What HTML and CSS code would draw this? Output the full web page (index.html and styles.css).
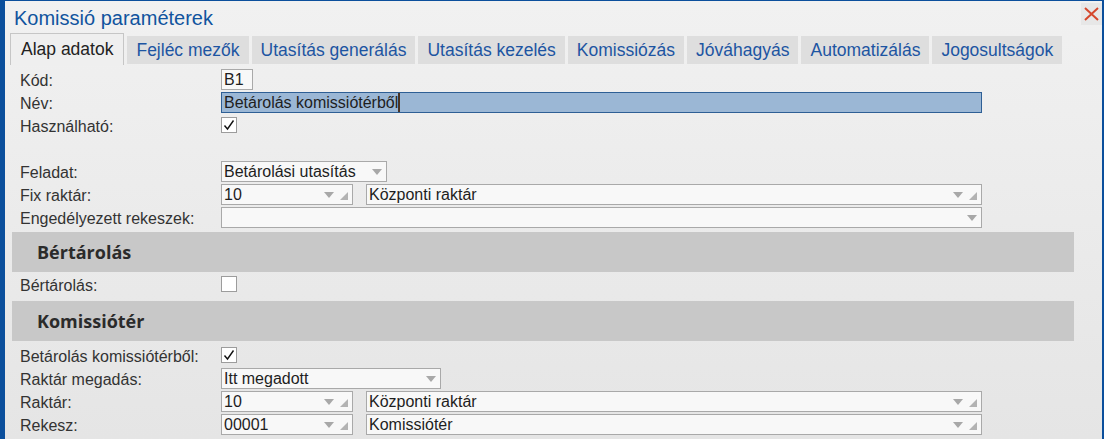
FILE: index.html
```html
<!DOCTYPE html>
<html lang="hu">
<head>
<meta charset="utf-8">
<title>Komissió paraméterek</title>
<link rel="stylesheet" href="styles.css">
</head>
<body>
<div class="window">
  <div class="titlebar">
    <span class="title">Komissió paraméterek</span>
    <button class="close" aria-label="Bezárás">
      <svg width="15" height="14" viewBox="0 0 15 14"><path d="M1 1 L14 13 M14 1 L1 13" stroke="#d5472c" stroke-width="2" fill="none"/></svg>
    </button>
  </div>
  <div class="tabs">
    <div class="tab tab--active">Alap adatok</div>
    <div class="tab">Fejléc mezők</div>
    <div class="tab">Utasítás generálás</div>
    <div class="tab">Utasítás kezelés</div>
    <div class="tab">Komissiózás</div>
    <div class="tab">Jóváhagyás</div>
    <div class="tab">Automatizálás</div>
    <div class="tab">Jogosultságok</div>
  </div>
  <div class="panel">
    <div class="row"><span class="lbl">Kód:</span><div class="field w-kod">B1</div></div>
    <div class="row"><span class="lbl">Név:</span><div class="field field--selected w-full"><span class="sel">Betárolás komissiótérből</span><span class="caret"></span></div></div>
    <div class="row"><span class="lbl">Használható:</span><span class="check"><svg width="14" height="14" viewBox="0 0 14 14"><path d="M2.5 7.5 L5.5 11 L11.5 2.5" stroke="#111" stroke-width="1.4" fill="none"/></svg></span></div>
    <div class="row"></div>
    <div class="row"><span class="lbl">Feladat:</span><div class="field w-feladat"><span class="val">Betárolási utasítás</span><span class="arrow"></span></div></div>
    <div class="row"><span class="lbl">Fix raktár:</span><div class="field w-code"><span class="val">10</span><span class="arrow"></span><span class="corner"></span></div><div class="field w-desc"><span class="val">Központi raktár</span><span class="arrow"></span><span class="corner"></span></div></div>
    <div class="row"><span class="lbl">Engedélyezett rekeszek:</span><div class="field w-full"><span class="val"></span><span class="arrow"></span></div></div>

    <div class="section-head section-head--first">Bértárolás</div>
    <div class="row row--after-first"><span class="lbl">Bértárolás:</span><span class="check"></span></div>

    <div class="section-head section-head--second">Komissiótér</div>
    <div class="row row--after-second"><span class="lbl">Betárolás komissiótérből:</span><span class="check"><svg width="14" height="14" viewBox="0 0 14 14"><path d="M2.5 7.5 L5.5 11 L11.5 2.5" stroke="#111" stroke-width="1.4" fill="none"/></svg></span></div>
    <div class="row"><span class="lbl">Raktár megadás:</span><div class="field w-mode"><span class="val">Itt megadott</span><span class="arrow"></span></div></div>
    <div class="row"><span class="lbl">Raktár:</span><div class="field w-code"><span class="val">10</span><span class="arrow"></span><span class="corner"></span></div><div class="field w-desc"><span class="val">Központi raktár</span><span class="arrow"></span><span class="corner"></span></div></div>
    <div class="row"><span class="lbl">Rekesz:</span><div class="field w-code"><span class="val">00001</span><span class="arrow"></span><span class="corner"></span></div><div class="field w-desc"><span class="val">Komissiótér</span><span class="arrow"></span><span class="corner"></span></div></div>
  </div>
</div>
</body>
</html>
```

FILE: styles.css
```css
* { box-sizing: border-box; }
html, body { margin: 0; padding: 0; }
body {
  width: 1104px;
  height: 439px;
  overflow: hidden;
  font-family: "Liberation Sans", Arial, sans-serif;
  background: #e8e8e8;
}
.window {
  width: 1104px;
  height: 439px;
  border-left: 5px solid #0b4f9c;
  border-top: 1px solid #0b4f9c;
  border-right: 2px solid #0b4f9c;
  background: linear-gradient(#f1f1f1, #e5e5e5);
  overflow: hidden;
}
.titlebar {
  height: 32px;
  display: flex;
  align-items: flex-start;
}
.title {
  margin: 5px 0 0 9px;
  font-size: 20px;
  line-height: 24px;
  color: #10549e;
}
.close {
  margin: 2px 0 0 auto;
  width: 21px;
  height: 22px;
  padding: 0;
  border: none;
  background: #e7e7e7;
  display: flex;
  align-items: center;
  justify-content: center;
}
.tabs {
  display: flex;
  align-items: flex-end;
  gap: 3px;
  height: 32px;
  padding-left: 5px;
}
.tab {
  height: 28px;
  margin-bottom: 1px;
  padding: 0 9px;
  display: flex;
  align-items: center;
  background: #dedede;
  color: #1d55a2;
  font-size: 17.5px;
  white-space: nowrap;
}
.tab--active {
  height: 32px;
  margin-bottom: 0;
  padding: 0 10px;
  background: #efefef;
  border: 1px solid #c6c6c6;
  border-bottom: none;
  color: #222;
}
.panel {
  padding: 4px 28px 0 7px;
}
.row {
  height: 23px;
  display: flex;
  align-items: flex-start;
  padding-left: 8px;
  font-size: 16px;
  line-height: 23px;
  color: #333;
}
.lbl {
  width: 201px;
  flex: none;
  white-space: nowrap;
}
.field {
  height: 21px;
  border: 1px solid #a9a9a9;
  background: #f8f8f8;
  padding: 0 0 0 2px;
  display: flex;
  align-items: center;
  line-height: 19px;
  color: #1e1e1e;
  white-space: nowrap;
  flex: none;
}
.val { flex: 1; overflow: hidden; }
.field--selected {
  background: #9bb7d5;
  border-color: #2e5f95;
}
.caret {
  width: 2px;
  height: 19px;
  background: #4a3424;
}
.arrow {
  width: 0;
  height: 0;
  border-left: 5.5px solid transparent;
  border-right: 5.5px solid transparent;
  border-top: 6px solid #a8a8a8;
  margin-right: 4px;
  flex: none;
}
.arrow + .corner { margin-left: 6px; }
.field .arrow:has(+ .corner) { margin-right: 0; }
.corner {
  width: 0;
  height: 0;
  border-left: 8px solid transparent;
  border-bottom: 8px solid #b3b3b3;
  align-self: flex-end;
  margin: 0 4px 4px 0;
  flex: none;
}
.w-kod { width: 32px; }
.w-full { width: 761px; }
.w-feladat { width: 166px; }
.w-code { width: 132px; }
.w-desc { width: 616px; margin-left: 13px; }
.w-mode { width: 220px; }
.check {
  width: 16px;
  height: 16px;
  margin-top: 2px;
  background: #fff;
  border: 1px solid #9c9c9c;
  display: flex;
  align-items: center;
  justify-content: center;
}
.section-head {
  height: 40px;
  background: #c8c8c8;
  padding-left: 25px;
  display: flex;
  align-items: center;
  font-family: "Open Sans", "Liberation Sans", sans-serif;
  font-weight: 700;
  font-size: 18px;
  color: #2b2b2b;
}
.section-head--first { margin-top: 2px; }
.section-head--second { margin-top: 4px; }
.row--after-first { margin-top: 2px; }
.row--after-second { margin-top: 4px; }
```
